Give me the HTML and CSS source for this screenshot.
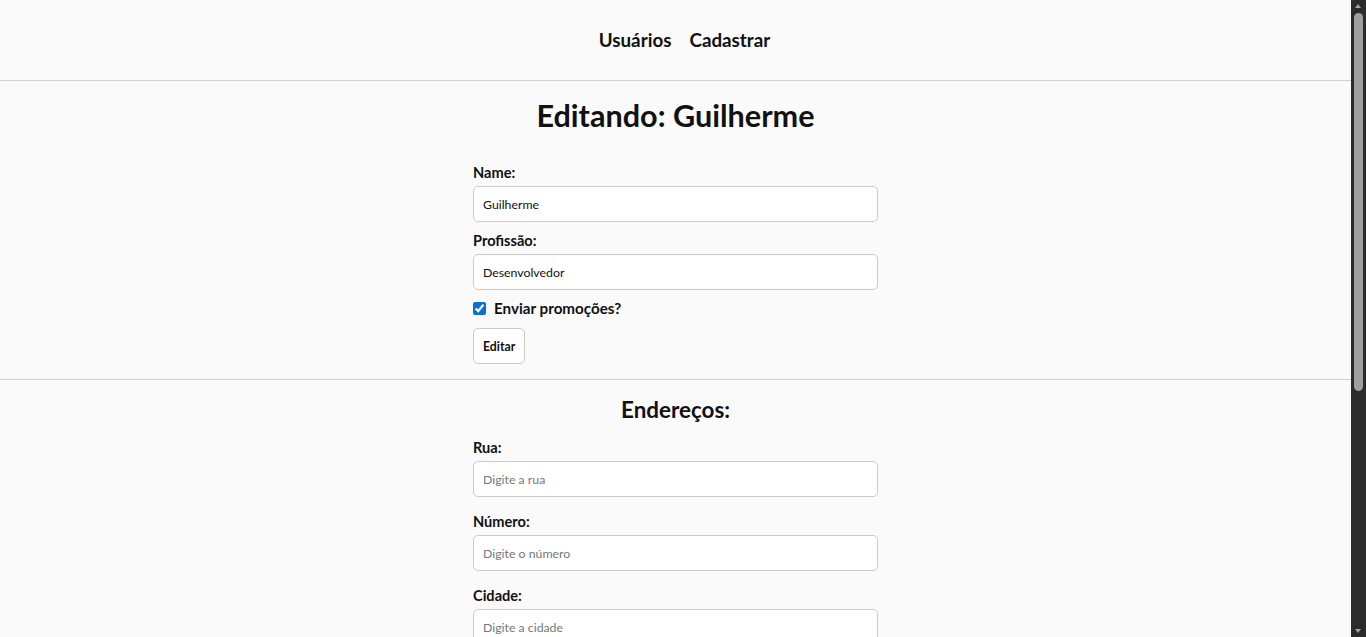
FILE: index.html
```html
<!DOCTYPE html>
<html lang="pt-BR">
<head>
<meta charset="utf-8">
<title>Editando: Guilherme</title>
<link rel="stylesheet" href="styles.css">
</head>
<body>
<header class="topbar">
  <nav class="nav">
    <a class="nav-link" href="#">Usuários</a>
    <a class="nav-link" href="#">Cadastrar</a>
  </nav>
</header>
<main>
  <section class="section">
    <h1 class="title">Editando: Guilherme</h1>
    <form class="form">
      <label class="label">Name:</label>
      <input class="input" type="text" value="Guilherme">
      <label class="label">Profissão:</label>
      <input class="input" type="text" value="Desenvolvedor">
      <div class="check-row">
        <input class="check" type="checkbox" checked>
        <span class="check-label">Enviar promoções?</span>
      </div>
      <button class="btn" type="button">Editar</button>
    </form>
  </section>
  <section class="section addresses">
    <h2 class="subtitle">Endereços:</h2>
    <form class="form form-addr">
      <div class="field">
        <label class="label">Rua:</label>
        <input class="input" type="text" placeholder="Digite a rua">
      </div>
      <div class="field">
        <label class="label">Número:</label>
        <input class="input" type="text" placeholder="Digite o número">
      </div>
      <div class="field">
        <label class="label">Cidade:</label>
        <input class="input" type="text" placeholder="Digite a cidade">
      </div>
      <div class="field">
        <label class="label">Estado:</label>
        <input class="input" type="text" placeholder="Digite o estado">
      </div>
      <div class="field">
        <label class="label">CEP:</label>
        <input class="input" type="text" placeholder="Digite o CEP">
      </div>
      <button class="btn" type="button">Adicionar</button>
    </form>
  </section>
</main>
<div class="scrollbar" aria-hidden="true">
  <span class="sb-arrow sb-up"></span>
  <span class="sb-thumb"></span>
  <span class="sb-arrow sb-down"></span>
</div>
</body>
</html>
```

FILE: styles.css
```css
html {
  background: #fafafa;
}
body {
  margin: 0 15px 0 0;
  background: #fafafa;
  color: #111;
  font-family: "Lato", "Noto Sans", sans-serif;
}
.topbar {
  height: 80px;
  border-bottom: 1px solid #cfcfcf;
  display: flex;
  align-items: center;
  justify-content: center;
}
.nav {
  display: flex;
  gap: 18px;
  padding-left: 18px;
}
.nav-link {
  color: #111;
  text-decoration: none;
  font-weight: 700;
  font-size: 18.8px;
  line-height: 24px;
}
.section {
  display: flex;
  flex-direction: column;
  align-items: center;
  padding-top: 15px;
  padding-bottom: 15px;
  border-bottom: 1px solid #cfcfcf;
}
.title {
  margin: 0 0 27px;
  font-size: 30.6px;
  line-height: 40px;
  font-weight: 700;
}
.form {
  width: 405px;
  display: flex;
  flex-direction: column;
  align-items: flex-start;
}
.label {
  display: block;
  font-size: 14.6px;
  font-weight: 700;
  line-height: 20px;
  margin-bottom: 3px;
}
.input {
  box-sizing: border-box;
  width: 100%;
  height: 36px;
  padding: 0 9px;
  border: 1px solid #cbcbcb;
  border-radius: 5px;
  background: #fff;
  font-family: inherit;
  font-size: 12.3px;
  color: #111;
  margin: 0 0 9px;
  outline: none;
}
.input::placeholder {
  color: #777;
}
.check-row {
  display: flex;
  align-items: center;
  height: 20px;
  margin-top: -1px;
  margin-bottom: 10px;
}
.check {
  width: 13px;
  height: 13px;
  margin: 0 8px 0 0;
  accent-color: #0b6fd6;
}
.check-label {
  font-size: 15.2px;
  font-weight: 700;
}
.btn {
  height: 36px;
  padding: 0 9px;
  border: 1px solid #cbcbcb;
  border-radius: 5px;
  background: #fff;
  color: #111;
  font-family: inherit;
  font-size: 12.3px;
  font-weight: 700;
}
.addresses {
  padding-top: 16px;
  padding-bottom: 40px;
  border-bottom: none;
}
.subtitle {
  margin: 0 0 14px;
  font-size: 22.4px;
  line-height: 28px;
  font-weight: 700;
}
.field {
  width: 100%;
  margin-bottom: 15px;
}
.field .input {
  margin: 0;
}
.scrollbar {
  position: fixed;
  top: 0;
  right: 0;
  width: 15px;
  height: 100vh;
  background: #2b2b2b;
}
.sb-arrow {
  position: absolute;
  left: 4px;
  width: 0;
  height: 0;
  border-left: 3.5px solid transparent;
  border-right: 3.5px solid transparent;
}
.sb-up {
  top: 4px;
  border-bottom: 4px solid #a3a3a3;
}
.sb-down {
  bottom: 4px;
  border-top: 4px solid #a3a3a3;
}
.sb-thumb {
  position: absolute;
  top: 13px;
  left: 3px;
  width: 9px;
  height: 378px;
  border-radius: 5px;
  background: #9f9f9f;
}
```
